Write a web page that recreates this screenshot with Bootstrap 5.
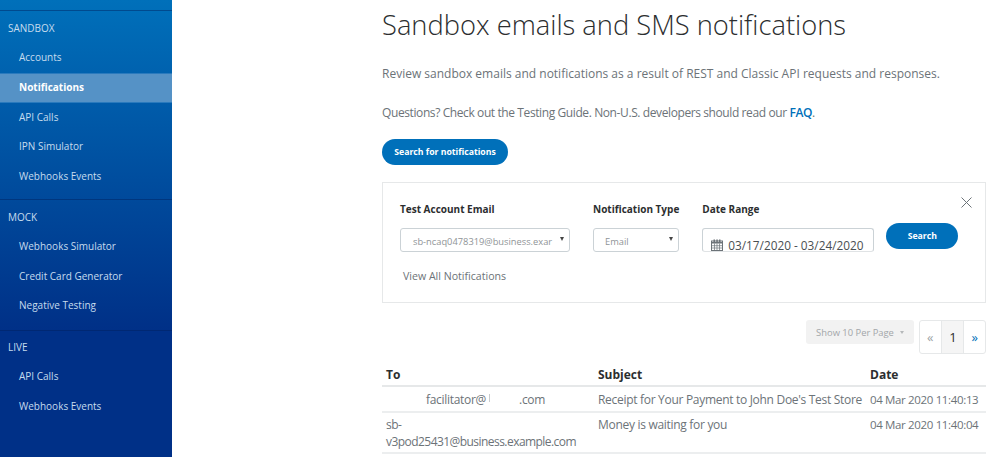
<!DOCTYPE html>
<html lang="en">

<head>
    <meta charset="UTF-8">
    <meta name="viewport" content="width=device-width, initial-scale=1.0">
    <title>Sandbox emails and SMS notifications</title>
    <link href="https://cdn.jsdelivr.net/npm/bootstrap@5.3.0/dist/css/bootstrap.min.css" rel="stylesheet">
    <style>
        html, body { height: 457px; overflow: hidden; }

        body {
            background-color: #fff;
            font-family: "Open Sans", "Noto Sans", sans-serif;
            font-size: 12px;
            color: #6c7378;
        }

        /* sidebar */
        .side-bar {
            width: 172px;
            height: 457px;
            flex: none;
            padding-top: 10px;
            background: linear-gradient(180deg, #0070ba 0, #003087 330px, #003087 100%);
            color: #c6dcee;
            font-size: 10px;
            font-weight: 500;
        }

        .side-group { border-top: 1px solid rgba(0, 32, 90, .45); padding: 8px 0 7px; }
        .side-mock { padding-bottom: 9px; }
        .side-live { padding-top: 7px; }
        .side-title { padding: 0 8px; height: 18px; line-height: 18px; margin-bottom: 6px; }
        .side-link { display: block; height: 29.75px; line-height: 29.75px; padding-left: 19px; color: #c6dcee; text-decoration: none; }
        .side-link.current { background-color: #5592c6; color: #fff; font-weight: 700; border-top: 1px solid #2a7abd; border-bottom: 1px solid #2a7abd; line-height: 27.75px; }

        /* main column */
        .main-col { width: 604px; margin-left: 210px; flex: none; }
        .page-title { font-size: 27.3px; font-weight: 300; color: #2c2e2f; margin: 7px 0 23px; line-height: 36px; }
        .intro { margin: 0 0 23px; line-height: 16px; font-size: 12px; }
        .intro-short { letter-spacing: -.4px; margin-bottom: 18px; }
        .intro a { color: #0070ba; font-weight: 600; text-decoration: none; }

        .pill-btn { background-color: #0070ba; border: 0; border-radius: 13px; color: #fff; font-size: 8.7px; font-weight: 700; height: 26px; padding: 2px 0 0; }
        .pill-wide { width: 126px; }
        .pill-small { width: 72px; margin-top: 22px; }

        /* filter box */
        .filter-box { border: 1px solid #e6e8e9; height: 121px; margin-top: 17px; padding: 18px 17px; position: relative; }
        .filter-box label { display: block; font-size: 10px; font-weight: 700; color: #2c2e2f; line-height: 16px; margin-bottom: 11px; }
        .field-gap { margin-left: 23px; }
        .search-gap { margin-left: 12px; }
        .fake-select { height: 24px; border: 1px solid #cbd2d6; border-radius: 3px; font-size: 9.3px; line-height: 25px; padding-left: 12px; color: #8f9497; position: relative; overflow: hidden; white-space: nowrap; }
        .fake-select::after { content: ""; position: absolute; right: 5px; top: 8px; border-left: 2.5px solid transparent; border-right: 2.5px solid transparent; border-top: 4px solid #444; }
        .email-select { width: 170px; padding-right: 20px; }
        .type-select { width: 86px; padding-left: 11px; }
        .date-input { width: 172px; height: 24px; border: 1px solid #cbd2d6; border-bottom-color: #e0e3e5; border-radius: 3px; font-size: 11.8px; line-height: 32px; color: #4a4f52; padding-left: 8px; overflow: hidden; white-space: nowrap; }
        .date-input svg { vertical-align: -1px; margin-right: 5px; }
        .view-all { font-size: 10.6px; margin-top: 16px; padding-left: 3px; line-height: 16px; }
        .close-x { position: absolute; top: 14px; right: 13px; }

        /* pager */
        .pager-row { margin: 17px 0 9px; height: 34px; }
        .per-page { width: 108px; height: 24px; margin-right: 5px; background-color: #f2f2f2; color: #a2a6a9; border-radius: 3px; font-size: 9.4px; line-height: 26px; text-align: center; }
        .per-page::after { content: ""; display: inline-block; margin-left: 6px; vertical-align: 2px; border-left: 2.5px solid transparent; border-right: 2.5px solid transparent; border-top: 3px solid #b5b8ba; }
        .pager-box { display: flex; border: 1px solid #e6e8e9; border-radius: 3px; height: 34px; width: 67px; }
        .pager-box span { flex: 1; text-align: center; line-height: 33px; font-size: 13px; color: #9da3a6; }
        .pager-box .on { background-color: #f5f5f5; color: #2c2e2f; border-left: 1px solid #e6e8e9; border-right: 1px solid #e6e8e9; padding-left: 1px; }
        .pager-box .next { color: #0070ba; }

        /* table */
        .mail-table { margin: 0; table-layout: fixed; width: 604px; font-size: 12px; color: #6c7378; }
        .col-to { width: 212px; }
        .col-subject { width: 272px; }
        .col-date { width: 120px; }
        .mail-table th { color: #2c2e2f; font-weight: 700; font-size: 12px; padding: 2px 4px 0; line-height: 20px; border-bottom: 2px solid #e6e8e9; }
        .mail-table td { color: #6c7378; padding: 3px 4px; line-height: 17.5px; border-bottom: 2px solid #eceeef; vertical-align: top; letter-spacing: -.3px; }
        .mail-table tbody tr:first-child td { padding-top: 4px; padding-bottom: 2px; }
        .mail-table tbody tr:last-child td { padding-bottom: 1px; }
        .mail-table .hole-a { padding-left: 44px; }
        .mail-table .long-mail { letter-spacing: -.55px; }
        .mail-table .stamp { font-size: 11.5px; letter-spacing: -.35px; white-space: nowrap; }
        .hole-b { padding-left: 33px; position: relative; }
        .hole-b::before { content: ""; position: absolute; left: 3px; top: 3px; width: 1px; height: 8px; background-color: #c9ccce; }
    </style>
</head>

<body>
    <div class="d-flex">
        <div class="side-bar">
            <div class="side-group">
                <div class="side-title">SANDBOX</div>
                <a class="side-link" href="#">Accounts</a>
                <a class="side-link current" href="#">Notifications</a>
                <a class="side-link" href="#">API Calls</a>
                <a class="side-link" href="#">IPN Simulator</a>
                <a class="side-link" href="#">Webhooks Events</a>
            </div>
            <div class="side-group side-mock">
                <div class="side-title">MOCK</div>
                <a class="side-link" href="#">Webhooks Simulator</a>
                <a class="side-link" href="#">Credit Card Generator</a>
                <a class="side-link" href="#">Negative Testing</a>
            </div>
            <div class="side-group side-live">
                <div class="side-title">LIVE</div>
                <a class="side-link" href="#">API Calls</a>
                <a class="side-link" href="#">Webhooks Events</a>
            </div>
        </div>

        <div class="main-col">
            <h1 class="page-title">Sandbox emails and SMS notifications</h1>
            <p class="intro">Review sandbox emails and notifications as a result of REST and Classic API requests and responses.</p>
            <p class="intro intro-short">Questions? Check out the Testing Guide. Non-U.S. developers should read our <a href="#">FAQ</a>.</p>
            <button class="pill-btn pill-wide" type="button">Search for notifications</button>

            <div class="filter-box">
                <svg class="close-x" width="11" height="11" viewBox="0 0 11 11"><path d="M.5.5l10 10M10.500.5l-10 10" stroke="#6c7378" fill="none"/></svg>
                <div class="d-flex">
                    <div>
                        <label>Test Account Email</label>
                        <div class="fake-select email-select">sb-ncaq0478319@business.exar</div>
                    </div>
                    <div class="field-gap">
                        <label>Notification Type</label>
                        <div class="fake-select type-select">Email</div>
                    </div>
                    <div class="field-gap">
                        <label>Date Range</label>
                        <div class="date-input"><svg width="12" height="12" viewBox="0 0 12 12"><rect x=".5" y="2" width="11" height="9.500" fill="#fff" stroke="#6c7378"/><path d="M1 3h10v1.500H1z" fill="#6c7378"/><path d="M2.500.5h1.500v2.500h-1.500zM5.300.5h1.500v2.500h-1.500zM8 .5h1.500v2.500H8z" fill="#6c7378"/><path d="M3.500 4.500v7M6 4.500v7M8.500 4.500v7M1 6.700h10M1 9h10" stroke="#6c7378" stroke-width=".7" fill="none"/></svg>03/17/2020 - 03/24/2020</div>
                    </div>
                    <div class="search-gap"><button class="pill-btn pill-small" type="button">Search</button></div>
                </div>
                <div class="view-all">View All Notifications</div>
            </div>

            <div class="pager-row d-flex justify-content-end">
                <div class="per-page">Show 10 Per Page</div>
                <div class="pager-box"><span>«</span><span class="on">1</span><span class="next">»</span></div>
            </div>

            <table class="table mail-table">
                <colgroup><col class="col-to"><col class="col-subject"><col class="col-date"></colgroup>
                <thead><tr><th>To</th><th>Subject</th><th>Date</th></tr></thead>
                <tbody>
                    <tr><td class="hole-a">facilitator@<span class="hole-b">.com</span></td><td>Receipt for Your Payment to John Doe's Test Store</td><td class="stamp">04 Mar 2020 11:40:13</td></tr>
                    <tr><td class="text-break long-mail">sb-<br>v3pod25431@business.example.com</td><td>Money is waiting for you</td><td class="stamp">04 Mar 2020 11:40:04</td></tr>
                </tbody>
            </table>
        </div>
    </div>
    <script src="https://cdn.jsdelivr.net/npm/bootstrap@5.3.0/dist/js/bootstrap.bundle.min.js"></script>
</body>

</html>
